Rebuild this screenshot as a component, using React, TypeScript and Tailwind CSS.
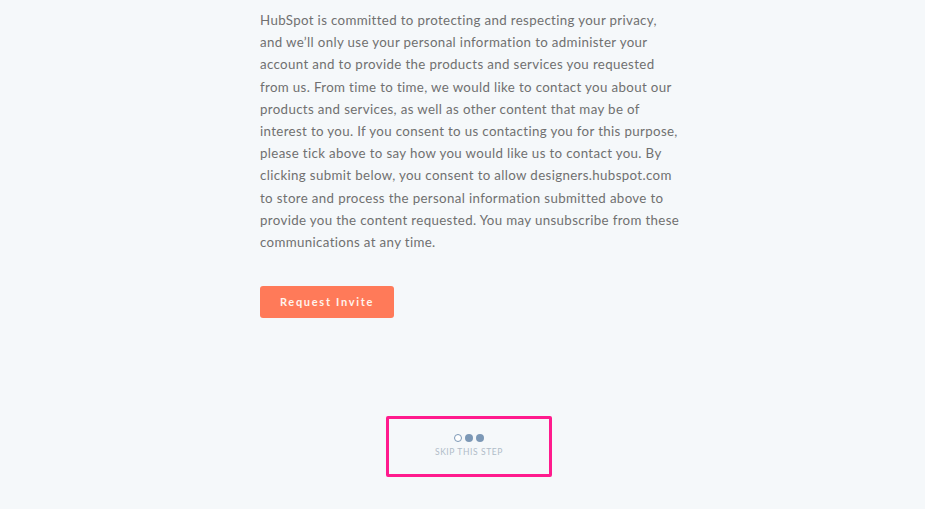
import React from "react";

const lines = [
  "HubSpot is committed to protecting and respecting your privacy,",
  "and we’ll only use your personal information to administer your",
  "account and to provide the products and services you requested",
  "from us. From time to time, we would like to contact you about our",
  "products and services, as well as other content that may be of",
  "interest to you. If you consent to us contacting you for this purpose,",
  "please tick above to say how you would like us to contact you. By",
  "clicking submit below, you consent to allow designers.hubspot.com",
  "to store and process the personal information submitted above to",
  "provide you the content requested. You may unsubscribe from these",
  "communications at any time.",
];

export default function App() {
  return (
    <div className="min-h-[509px] w-[925px] bg-[#f5f8fa] font-['Lato',sans-serif]">
      <section className="ml-[260px] w-[460px] pt-[9px]">
        <p className="text-[13.3px] leading-[22.2px] tracking-[0.35px] text-[#707070]">
          {lines.map((l, i) => (
            <span key={i} className="block whitespace-nowrap">
              {l}
            </span>
          ))}
        </p>
        <button className="mt-[33px] h-[32px] w-[134px] rounded-[3px] bg-[#ff7a59] text-[11px] font-bold tracking-[1.7px] text-[#fff3ec]">
          Request Invite
        </button>
      </section>

      <div className="mt-[98px] flex justify-center pl-[13px]">
        <div className="flex h-[61px] w-[166px] flex-col items-center justify-center gap-[4px] rounded-[2px] border-[3px] border-[#ff1b8d]">
          <div className="flex items-center gap-[3px]">
            <span className="h-[8px] w-[8px] rounded-full border border-[#7c98b6] bg-white" />
            <span className="h-[8px] w-[8px] rounded-full bg-[#7c98b6]" />
            <span className="h-[8px] w-[8px] rounded-full bg-[#7c98b6]" />
          </div>
          <span className="text-[8.5px] uppercase tracking-[0.6px] text-[#b0bcc8]">Skip this step</span>
        </div>
      </div>
    </div>
  );
}
